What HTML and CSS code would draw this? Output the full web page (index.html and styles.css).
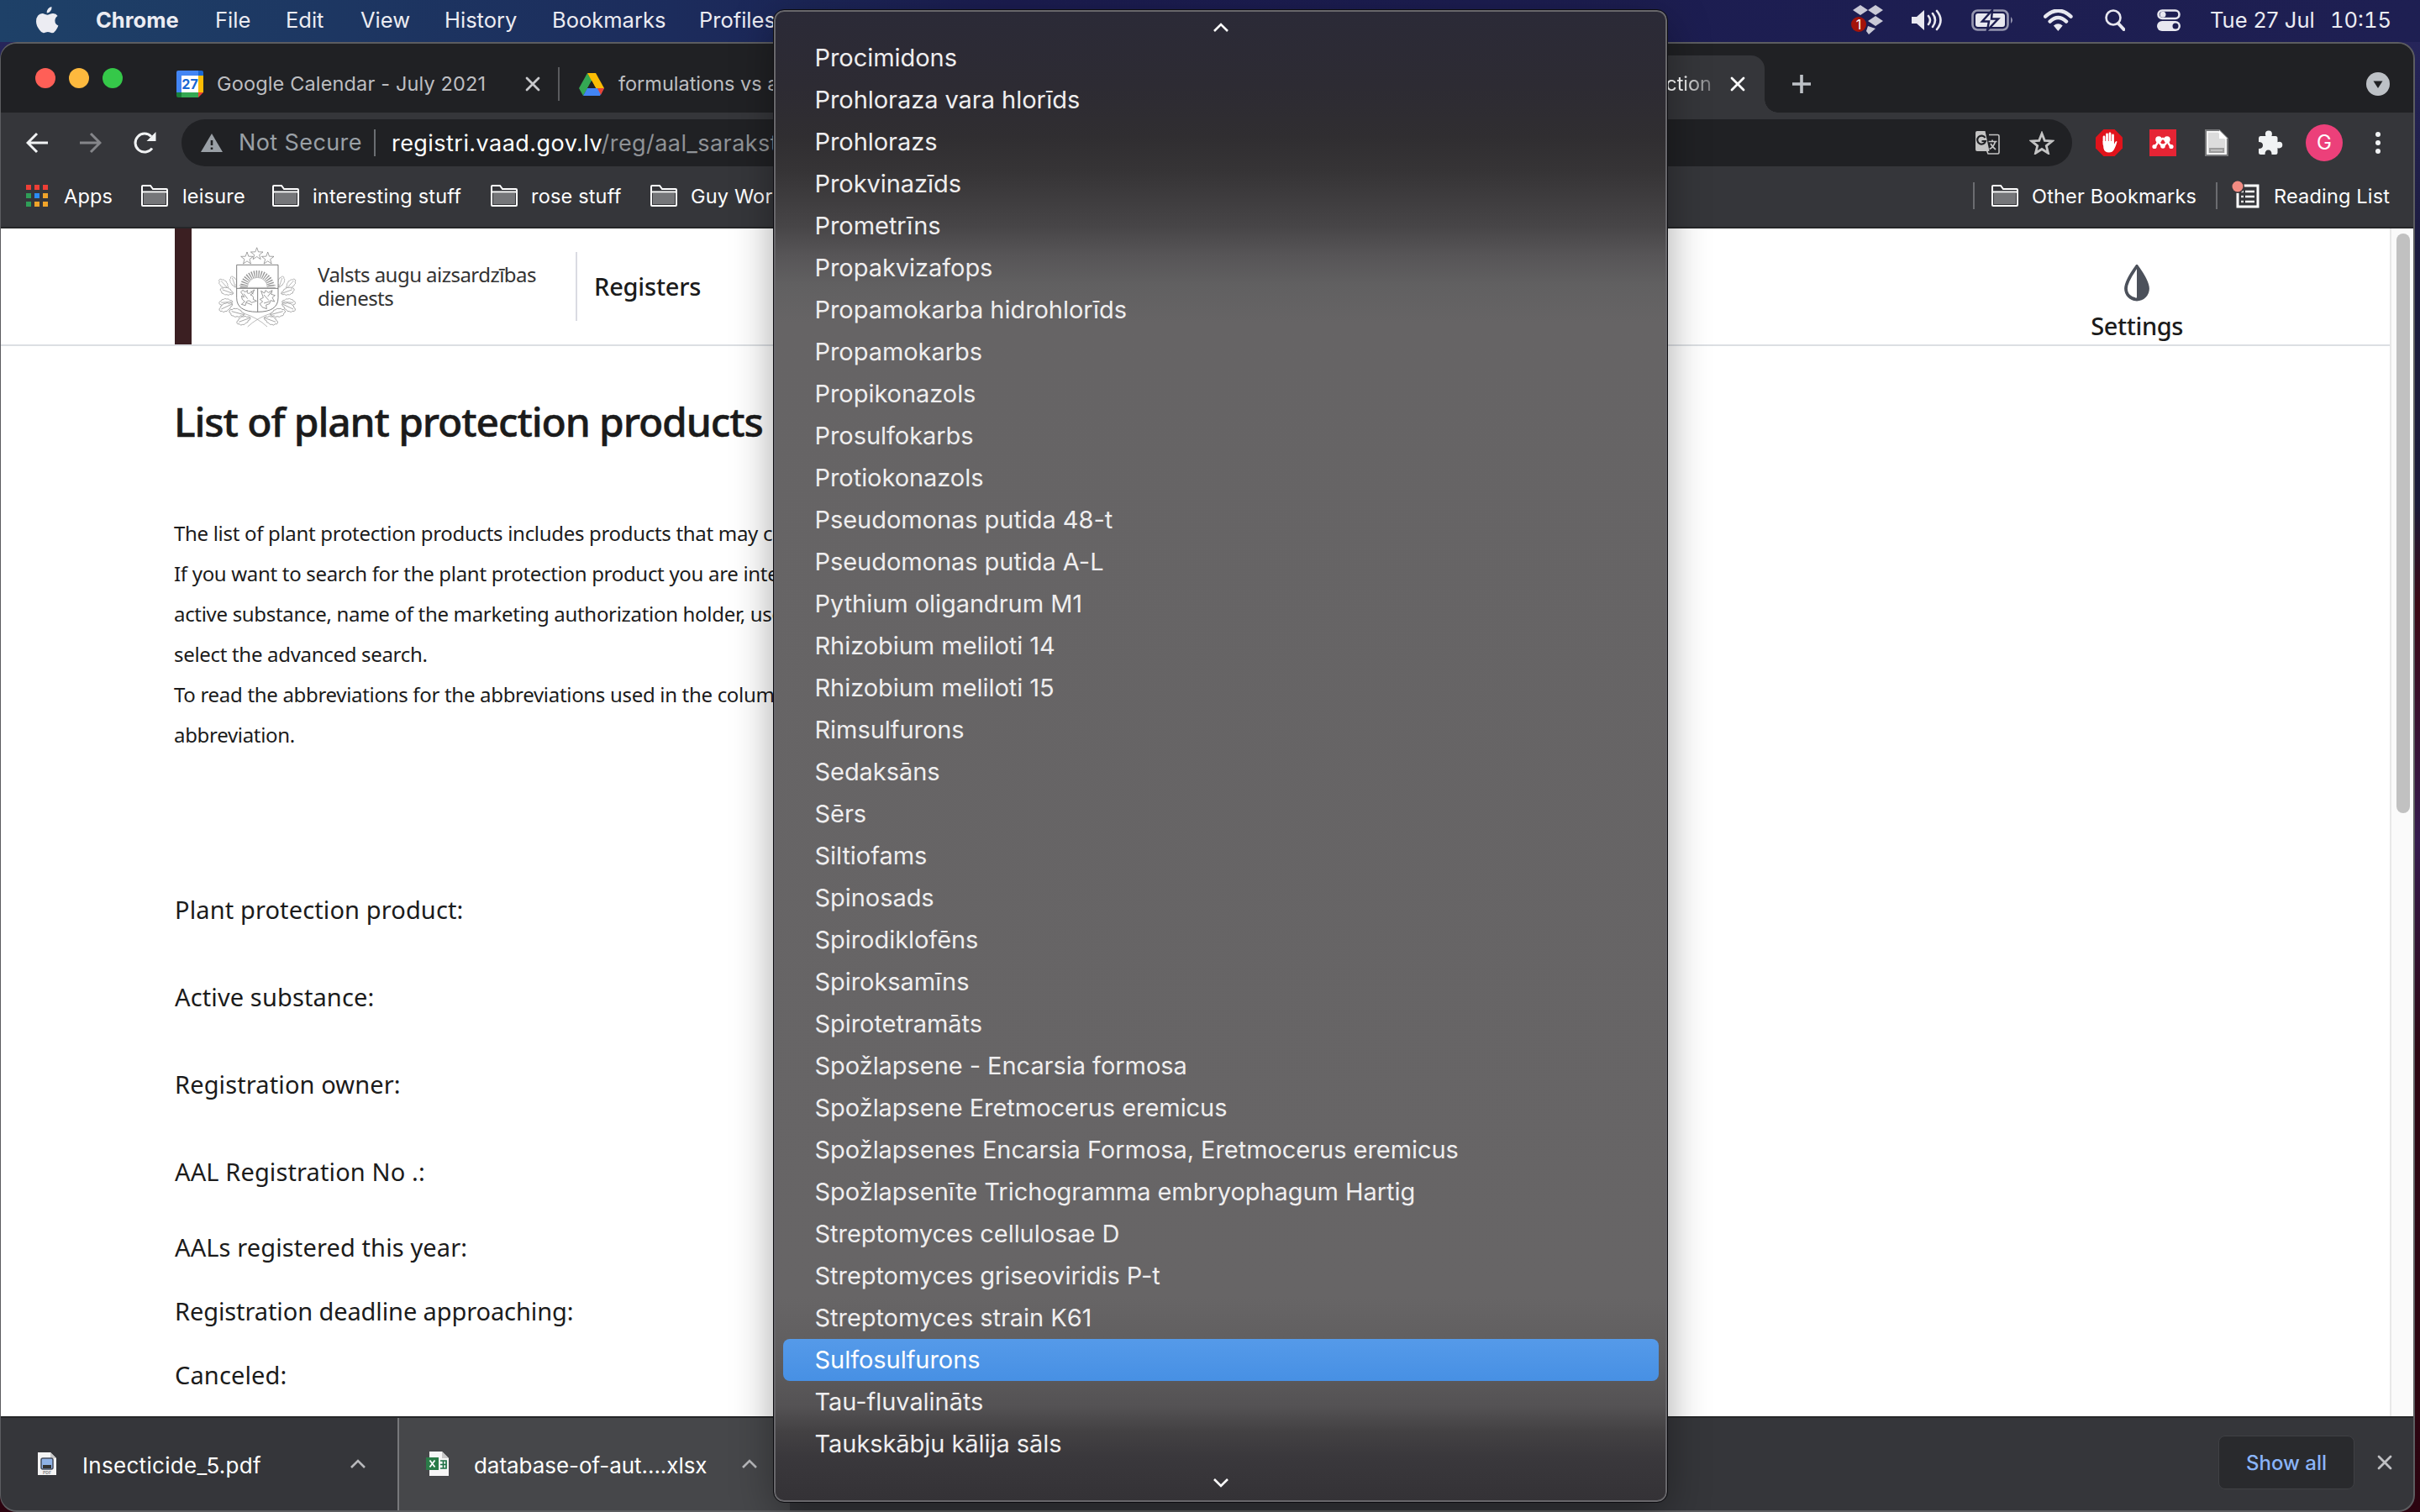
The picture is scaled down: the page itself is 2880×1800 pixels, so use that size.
FILE: index.html
```html
<!DOCTYPE html>
<html lang="en">
<head>
<meta charset="utf-8">
<title>List of plant protection products</title>
<link rel="stylesheet" href="styles.css">
</head>
<body>
<svg class="defs" aria-hidden="true">
  <symbol id="folder" viewBox="0 0 32 26"><path d="M3 10h26v13H3z" fill="#757679"/><path d="M1 24V2q0-1 1-1h9l3 4h16q1 0 1 1v18q0 1-1 1H2q-1 0-1-1zM1 8.500h30" fill="none" stroke="#fff" stroke-width="2"/></symbol>
  <symbol id="cross" viewBox="0 0 18 18"><path d="M2 2l14 14M16 2L2 16" fill="none" stroke="currentColor" stroke-width="2.800" stroke-linecap="round"/></symbol>
  <symbol id="chev" viewBox="0 0 20 12"><path d="M2 10l8-8 8 8" fill="none" stroke="currentColor" stroke-width="2.600"/></symbol>
  <symbol id="star5" viewBox="-24 -24 48 48"><path d="M0-23L5.500-7.500 22-7 9 3 13.500 19 0 9.500-13.500 19-9 3-22-7-5.500-7.500z" fill="#fff" stroke="#777" stroke-width="2"/></symbol>
  <symbol id="leaf" viewBox="0 0 44 26"><path d="M2 13q4-7 9-5 1-6 8-4 5-5 10-1 7-2 7 4 7 1 6 6-1 5-7 5 0 5-7 4-4 4-9 0-6 2-8-4-6 1-9-5zM4 13h32" fill="#fff" stroke="#909090" stroke-width="1.600"/></symbol>
</svg>
<div class="desktop">
  <header class="menubar">
    <nav class="menus">
      <svg class="apple" viewBox="0 0 27 32"><path d="M18.500 0q.4 3-1.500 5.200-2 2.300-4.300 2.200-.3-2.800 1.500-5Q16 .4 18.500 0zM25.600 11q-3.200 2-3.200 5.600 0 4.400 4 6-1 3-3 5.700-2 3-4.400 3-1.200 0-2.600-.7-2.400-1-5 0-1.300.7-2.600.7-2.400-.1-4.700-3.600Q0 22.600 0 17.500q0-4.300 2.200-7Q4.300 8 7.300 8q1.300 0 3.300.9 2 .8 2.900.8.700 0 3-1 2-.8 3.800-.7 3.500.2 5.300 3z"/></svg>
      <b>Chrome</b><span>File</span><span>Edit</span><span>View</span><span>History</span><span>Bookmarks</span><span>Profiles</span>
    </nav>
    <div class="status">
      <svg class="dropbox" viewBox="0 0 40 36"><path d="M11 0l9 6-9 6-9-6zM29 0l9 6-9 6-9-6zM29 13l9 6-9 6-9-6zM20 25l9 3-8 7-3-4z" fill="#c9c9d6"/><circle cx="9" cy="23" r="9" fill="#a3140b"/><text x="9" y="29" text-anchor="middle" fill="#fff">1</text></svg>
      <svg viewBox="0 0 36 26"><path d="M0 9h6l9-8v24l-9-8H0z"/><path d="M20 8q4 5 0 10M25 5q6 8 0 16M30 2q9 11 0 22" class="ln"/></svg>
      <svg viewBox="0 0 50 26"><rect x="1.500" y="1.500" width="42" height="23" rx="6" class="ln dim"/><rect x="5" y="5" width="35" height="16" rx="3"/><path d="M47 9q4 4 0 8z" opacity=".6"/><path d="M25 1L13 14.500h8L19 25l13-13.500h-8z" stroke="#1d1e50" stroke-width="2.500"/></svg>
      <svg viewBox="0 0 32 24"><path d="M2 8q14-13 28 0M7 13.500q9-8.500 18 0" class="ln w4"/><path d="M11 18q5-4 10 0l-5 6z"/></svg>
      <svg viewBox="0 0 24 26"><circle cx="10" cy="10" r="8.500" class="ln"/><path d="M16 17l6.500 7" class="ln w4"/></svg>
      <svg viewBox="0 0 28 26"><rect x="1.500" y="1.500" width="25" height="9.500" rx="4.700" class="ln"/><circle cx="7" cy="6.200" r="3.500"/><rect x="0" y="14" width="28" height="12" rx="6"/><circle cx="22" cy="20" r="3.500" fill="#1d1e50"/></svg>
      <span>Tue 27 Jul</span><span class="clock">10:15</span>
    </div>
  </header>

  <main class="window">
    <div class="tabs">
      <div class="lights"><i></i><i></i><i></i></div>
      <div class="tab first">
        <svg class="cal" viewBox="0 0 32 32"><path d="M2 0h24v6H6v20H0V2q0-2 2-2z" fill="#4285f4"/><path d="M26 0h4q2 0 2 2v4h-6z" fill="#1967d2"/><path d="M26 6h6v20h-6z" fill="#fbbc04"/><path d="M6 26h20v6H6z" fill="#34a853"/><path d="M0 26h6v6H2q-2 0-2-2z" fill="#188038"/><path d="M26 26h6l-6 6z" fill="#ea4335"/><path d="M6 6h20v20H6z" fill="#fff"/><text x="16" y="21.500" text-anchor="middle">27</text></svg>
        <span>Google Calendar - July 2021</span>
        <svg class="x"><use href="#cross"/></svg>
      </div>
      <div class="tab second">
        <svg class="drive" viewBox="0 0 30 27"><path d="M10 0l5.500 9L5 27 0 18z" fill="#34a853"/><path d="M10 0h10l10 18H20z" fill="#fbbc04"/><path d="M10 18h20l-5 9H5z" fill="#4285f4"/><path d="M22 18h8l-4 8z" fill="#ea4335"/><path d="M15 9l5 9H10z" fill="#202124"/></svg>
        <span>formulations vs active</span>
      </div>
      <div class="tab active"><span>plant protection</span><svg class="x"><use href="#cross"/></svg></div>
      <svg class="plus" viewBox="0 0 24 24"><path d="M12 1v22M1 12h22"/></svg>
      <svg class="tabsearch" viewBox="0 0 28 28"><circle cx="14" cy="14" r="14" fill="#bdc1c6"/><path d="M8.500 10.500h11L14 19z" fill="#202124"/></svg>
    </div>

    <div class="toolbar">
      <svg class="back" viewBox="0 0 26 26"><path d="M26 13H3M13 2L2 13l11 11"/></svg>
      <svg class="fwd" viewBox="0 0 26 26"><path d="M0 13h23M13 2l11 11-11 11"/></svg>
      <svg class="reload" viewBox="0 0 28 28"><path d="M23 20.500A11 11 0 1 1 22 6.500"/><path d="M27.500 1v11h-11z" class="fill"/></svg>
      <div class="omnibox">
        <svg class="warn" viewBox="0 0 26 22"><path d="M13 0l13 22H0z" fill="#9aa0a6"/><path d="M13 8v6M13 16.500v2.500" stroke="#202124" stroke-width="2.600"/></svg>
        <span class="secure">Not Secure</span>
        <span class="url">registri.vaad.gov.lv<em>/reg/aal_saraksts</em></span>
        <svg class="trans" viewBox="0 0 29 28"><path d="M16 4.500h10.500q1.500 0 1.500 1.500v19.500q0 1.500-1.500 1.500H15l-2-5" fill="none" stroke="#c4c4c4" stroke-width="1.600"/><path d="M2 0h9.500l5 24H2q-2 0-2-2V2q0-2 2-2z" fill="#c4c4c4"/><path d="M11.500 8A5 5 0 1 0 12 12H7.500" fill="none" stroke="#202124" stroke-width="2.200"/><path d="M15.500 12.500h10M20 10.500v2M23.500 12.500q-2 7-7 9M18 15q2 4 6 7" fill="none" stroke="#c4c4c4" stroke-width="1.700"/></svg>
        <svg class="fav" viewBox="0 0 30 28"><path d="M15 3l3.300 8.300 8.900.6-6.900 5.700 2.200 8.700L15 21.500l-7.500 4.800 2.200-8.700-6.900-5.700 8.900-.6z"/></svg>
      </div>
      <div class="exts">
        <svg viewBox="0 0 32 32"><path d="M9.400 0h13.200L32 9.400v13.200L22.600 32H9.400L0 22.600V9.400z" fill="#e0131b"/><path d="M10 9v9M13.500 6v11M17 5v12M20.500 7v11" stroke="#fff" stroke-width="2.800" stroke-linecap="round"/><path d="M8.600 14h13.300v4l1.500-3q2-2 2 0-1 4-3 8-2 4.500-6.500 4.500-5.500 0-6.500-5z" fill="#fff"/></svg>
        <svg viewBox="0 0 32 32"><path d="M0 0h32v32H0z" fill="#e62434"/><path d="M6 20q4-2 4-7M26 20q-4-2-4-7M11 12q1 7 5 7t5-7M14 12l2-1 2 1" fill="none" stroke="#fff" stroke-width="2.500"/><g fill="#fff"><circle cx="6" cy="20.500" r="2.600"/><circle cx="26" cy="20.500" r="2.600"/><circle cx="16" cy="20" r="2.800"/><circle cx="11" cy="12" r="3.800"/><circle cx="21" cy="12" r="3.800"/></g></svg>
        <svg viewBox="0 0 32 32"><path d="M3 1h16l10 10v20H3z" fill="#e2e2e2" stroke="#77787a" stroke-width="2"/><path d="M5 3h13l9 9v17H5z" fill="#dcdcdc" stroke="#fafafa" stroke-width="1.500"/><path d="M19 1v10h10z" fill="#fff"/><path d="M7 22h18v6H7z" fill="#9c9c9c"/><path d="M9 25h14" stroke="#ccc" stroke-width="1.600"/></svg>
        <svg viewBox="0 0 32 32"><path d="M4 8h6.500q-.6-1-.6-2.500a4 4 0 0 1 8 0q0 1.500-.6 2.500H22q2.500 0 2.500 2.500v4.800q1-.5 2-.5a3.700 3.700 0 0 1 0 7.600q-1 0-2-.5v5.600q0 2.500-2.500 2.500h-4.500q0-5.500-4-5.500T9.500 30H4.500Q2 30 2 27.500V23q5 0 5-4t-5-4v-4.500Q2 8 4 8z" fill="#f1f3f4"/></svg>
        <span class="avatar">G</span>
        <svg class="dots" viewBox="0 0 6 28"><circle cx="3" cy="4" r="3"/><circle cx="3" cy="14" r="3"/><circle cx="3" cy="24" r="3"/></svg>
      </div>
    </div>

    <div class="bookmarks">
      <svg class="apps" viewBox="0 0 26 27"><g fill="#ee3f36"><path d="M0 0h6v6H0zM10 0h6v6h-6zM20 0h6v6h-6z"/></g><path d="M0 10h6v6H0zM0 20h6v6H0z" fill="#2f9e58"/><path d="M10 10h6v6h-6z" fill="#2b8cf5"/><path d="M20 10h6v6h-6zM10 20h6v6h-6zM20 20h6v6h-6z" fill="#f0a42a"/></svg>
      <span>Apps</span>
      <svg class="folder"><use href="#folder"/></svg><span>leisure</span>
      <svg class="folder"><use href="#folder"/></svg><span>interesting stuff</span>
      <svg class="folder"><use href="#folder"/></svg><span>rose stuff</span>
      <svg class="folder"><use href="#folder"/></svg><span>Guy Work</span>
      <i class="sep"></i>
      <svg class="folder"><use href="#folder"/></svg><span>Other Bookmarks</span>
      <i class="sep"></i>
      <svg class="reading" viewBox="0 0 34 34"><rect x="7" y="6" width="24" height="25" fill="none" stroke="#fff" stroke-width="3"/><path d="M16 13h11M16 19h11M16 25h11" stroke="#fff" stroke-width="2.500"/><path d="M11 13h3M11 19h3M11 25h3" stroke="#ddd" stroke-width="2.500"/><circle cx="7" cy="7" r="8" fill="#35363a"/><circle cx="7" cy="7" r="6.500" fill="#f28b82"/></svg>
      <span>Reading List</span>
    </div>

    <div class="view">
      <div class="page">
        <header class="site">
          <svg class="emblem" viewBox="0 0 390 360">
            <g transform="translate(-7 0)">
              <use href="#leaf" width="50" height="30" transform="translate(92 200) rotate(-132)"/>
              <use href="#leaf" width="46" height="28" transform="translate(116 190) rotate(-110)"/>
              <use href="#leaf" width="56" height="32" transform="translate(118 222) rotate(-160)"/>
              <use href="#leaf" width="54" height="32" transform="translate(122 250) rotate(-185)"/>
              <use href="#leaf" width="60" height="34" transform="translate(128 256) rotate(155)"/>
              <use href="#leaf" width="66" height="36" transform="translate(160 300) rotate(195)"/>
              <use href="#leaf" width="62" height="34" transform="translate(192 306) rotate(160)"/>
            </g>
            <g transform="matrix(-1 0 0 1 404 0)">
              <use href="#leaf" width="50" height="30" transform="translate(92 200) rotate(-132)"/>
              <use href="#leaf" width="46" height="28" transform="translate(116 190) rotate(-110)"/>
              <use href="#leaf" width="56" height="32" transform="translate(118 222) rotate(-160)"/>
              <use href="#leaf" width="54" height="32" transform="translate(122 250) rotate(-185)"/>
              <use href="#leaf" width="60" height="34" transform="translate(128 256) rotate(155)"/>
              <use href="#leaf" width="66" height="36" transform="translate(160 300) rotate(195)"/>
              <use href="#leaf" width="62" height="34" transform="translate(192 306) rotate(160)"/>
            </g>
            <path d="M150 276q50 16 84 48M248 276q-50 16-84 48" class="thin"/>
            <use href="#star5" x="138" y="56" width="48" height="48"/><use href="#star5" x="212" y="56" width="48" height="48"/><use href="#star5" x="173" y="40" width="48" height="48"/>
            <path d="M125 103h148v118q0 50-74 50t-74-50z" fill="#fff" stroke="#666" stroke-width="2.500"/>
            <path d="M150 184a49 49 0 0 1 98 0" fill="none" stroke="#999" stroke-width="24" stroke-dasharray="4 4"/>
            <path d="M163 184a36 36 0 0 1 72 0M134 184h130M134 176h26M238 176h26" class="thin"/>
            <path d="M125 187h148M200 187v84" stroke="#666" stroke-width="2.500"/>
            <path d="M140 200q8-12 14 0l10-6q-6 14 8 10l16-12q-4 16-14 18 14 4 10 16l12 6-18 6q-8-12-18-4l-4 14-14-4 12-10q-12-6-12-20l10 4zM150 206l14 18M176 196l8 12M160 238l20 8" class="lion"/>
            <path d="M212 196l12 8 4-10 10 8 14-8-4 14 14 4-10 8 8 14-14-4-4 12-12 4 2 14-16-6-8-12 10-8-10-8 12-6zM222 210l18 20M248 200l-12 16M222 240l20-6" class="lion"/>
          </svg>
          <p class="org">Valsts augu aizsardzības<br>dienests</p>
          <a class="reg">Registers</a>
          <a class="settings">
            <svg viewBox="0 0 32 44"><path d="M16 2Q3 20 3 28.500a13 13 0 0 0 26 0Q29 20 16 2z" fill="none" stroke="#4c515b" stroke-width="3.800"/><path d="M16 2Q29 20 29 28.500a13 13 0 0 1-13 13z" fill="#4c515b"/></svg>
            <span>Settings</span>
          </a>
        </header>
        <h1>List of plant protection products</h1>
        <p class="intro">The list of plant protection products includes products that may currently<br>If you want to search for the plant protection product you are interested<br>active substance, name of the marketing authorization holder, use or<br>select the advanced search.<br>To read the abbreviations for the abbreviations used in the columns<br>abbreviation.</p>
        <form class="search">
          <label>Plant protection product:</label>
          <label>Active substance:</label>
          <label>Registration owner:</label>
          <label>AAL Registration No .:</label>
          <label class="tick">AALs registered this year:</label>
          <label class="tick deadline">Registration deadline approaching:</label>
          <label class="tick">Canceled:</label>
        </form>
      </div>
      <div class="track"><div class="thumb"></div></div>
    </div>

    <footer class="downloads">
      <div class="item">
        <svg class="file" viewBox="0 0 24 29"><path d="M1 1h15l7 7v20H1z" fill="#f4f4f4"/><path d="M16 1v7h7z" fill="#c8c8c8"/><rect x="5" y="8" width="14" height="13" rx="2" fill="#8fb2e6" stroke="#444c5e" stroke-width="1.500"/><path d="M7 16h10v4H7z" fill="#333"/><text x="12" y="27" text-anchor="middle" class="pdf">PDF</text></svg>
        <span>Insecticide_5.pdf</span>
        <svg class="up"><use href="#chev"/></svg>
      </div>
      <div class="item two">
        <svg class="file" viewBox="0 0 27 29"><path d="M4 0h15l8 8v21H4z" fill="#f6f6f6"/><path d="M19 0v8h8z" fill="#c8c8c8"/><path d="M17 11h7v9h-7M17 15.500h7M20.500 11v9" fill="none" stroke="#1d7044" stroke-width="1.700"/><path d="M0 7h15v15H0z" fill="#2a7b48"/><path d="M4.500 10.500l6 8M10.500 10.500l-6 8" stroke="#fff" stroke-width="1.800"/></svg>
        <span>database-of-aut....xlsx</span>
        <svg class="up"><use href="#chev"/></svg>
      </div>
      <button class="showall">Show all</button>
      <svg class="x"><use href="#cross"/></svg>
    </footer>
  </main>
</div>

<div class="dropdown">
  <svg class="more up"><use href="#chev"/></svg>
  <ul>
    <li>Procimidons</li><li>Prohloraza vara hlorīds</li><li>Prohlorazs</li><li>Prokvinazīds</li><li>Prometrīns</li><li>Propakvizafops</li><li>Propamokarba hidrohlorīds</li><li>Propamokarbs</li><li>Propikonazols</li><li>Prosulfokarbs</li><li>Protiokonazols</li><li>Pseudomonas putida 48-t</li><li>Pseudomonas putida A-L</li><li>Pythium oligandrum M1</li><li>Rhizobium meliloti 14</li><li>Rhizobium meliloti 15</li><li>Rimsulfurons</li><li>Sedaksāns</li><li>Sērs</li><li>Siltiofams</li><li>Spinosads</li><li>Spirodiklofēns</li><li>Spiroksamīns</li><li>Spirotetramāts</li><li>Spožlapsene - Encarsia formosa</li><li>Spožlapsene Eretmocerus eremicus</li><li>Spožlapsenes Encarsia Formosa, Eretmocerus eremicus</li><li>Spožlapsenīte Trichogramma embryophagum Hartig</li><li>Streptomyces cellulosae D</li><li>Streptomyces griseoviridis P-t</li><li>Streptomyces strain K61</li><li class="on">Sulfosulfurons</li><li>Tau-fluvalināts</li><li>Taukskābju kālija sāls</li>
  </ul>
  <svg class="more down"><use href="#chev"/></svg>
</div>
</body>
</html>
```
FILE: styles.css
```css
* { box-sizing: border-box; }
html, body { margin: 0; width: 2880px; height: 1800px; overflow: hidden; }
body { position: relative; font-family: Inter, "Liberation Sans", sans-serif; color: #fff; white-space: nowrap; }
ul, p, h1 { margin: 0; padding: 0; list-style: none; }
svg { display: block; flex: none; }
.defs { position: absolute; width: 0; height: 0; }

.desktop { display: flex; flex-direction: column; height: 1800px; background: linear-gradient(#26255a 50px, #1c1b3e 300px, #1a1a38 600px, #3c0814 720px, #351a4e 1000px, #2c0612 1250px, #2c0410); }

/* macOS menu bar */
.menubar { display: flex; justify-content: space-between; height: 50px; padding: 0 0 3px 43px; background: linear-gradient(90deg, #1e4168, #1c2c5c 800px, #1b1c50 1200px, #1e1f52); font-size: 25.500px; color: #ececf2; }
.menus { display: grid; grid-template-columns: 71px 142px 84px 89px 100px 128px 175px 100px; align-items: center; }
.apple { width: 27px; height: 32px; fill: #ececf2; }
.status { display: grid; grid-template-columns: 72px 71px 86px 73px 62px 63px 143px 107px; align-items: center; fill: #e8e8f0; }
.status svg { height: 26px; justify-self: start; }
.status .dropbox { height: 36px; font-size: 16px; }
.status .clock { font-variant-numeric: tabular-nums; }
.ln { fill: none; stroke: #e8e8f0; stroke-width: 2.600; stroke-linecap: round; }
.dim { opacity: .6; }
.w4 { stroke-width: 4; }

/* Browser window */
.window { display: flex; flex-direction: column; width: 2874px; height: 1750px; border: 2px solid #5c5d60; border-left-width: 1px; border-radius: 20px; overflow: hidden; background: #35363a; }
.tabs { display: flex; align-items: center; height: 82px; background: #202124; font-size: 23.500px; color: #bdbec1; }
.lights { display: flex; gap: 16px; width: 208px; padding-left: 41px; flex: none; }
.lights i { width: 24px; height: 24px; border-radius: 50%; background: #ff5f57; }
.lights i + i { background: #fdb93e; }
.lights i + i + i { background: #35c849; }
.tab { display: flex; align-items: center; padding-top: 14px; height: 82px; flex: none; }
.tab span { margin-top: -1px; }
.first { width: 457px; padding-left: 1px; }
.first::after { content: ""; width: 2px; height: 40px; background: #5a5b5e; margin-left: 21px; }
.cal { width: 32px; height: 32px; font-size: 16px; font-weight: 700; fill: #1967d2; }
.first span { width: 368px; margin-left: 16px; letter-spacing: .15px; }
.x { width: 18px; height: 18px; color: #c8c9cc; }
.second { width: 1165px; padding-left: 23px; }
.drive { width: 30px; height: 27px; margin-right: 17px; }
.active { width: 269px; height: 68px; margin-top: 14px; padding: 0 23px 0 0; border-radius: 16px 16px 0 0; background: #35363a; justify-content: flex-end; color: #fff; position: relative; }
.active span { -webkit-mask-image: linear-gradient(90deg, #000 78%, transparent 110%); mask-image: linear-gradient(90deg, #000 78%, transparent 110%); margin-right: 22px; }
.active .x { color: #fff; }
.active::after { content: ""; position: absolute; right: -16px; bottom: 0; width: 16px; height: 16px; background: radial-gradient(circle at 100% 0, transparent 15.500px, #35363a 16px); }
.plus { width: 24px; height: 24px; margin: 14px 0 0 32px; stroke: #bdc1c6; stroke-width: 3.600; }
.tabsearch { width: 28px; height: 28px; margin: 14px 28px 0 auto; }

.toolbar { display: flex; align-items: center; height: 72px; padding-left: 30px; fill: none; stroke: #f1f3f4; stroke-width: 3; }
.back, .fwd { width: 26px; height: 26px; }
.fwd { margin: 0 37px 0 38px; stroke: #85868a; }
.reload { width: 28px; height: 28px; }
.fill { fill: #f1f3f4; stroke: none; }
.omnibox { display: flex; align-items: center; width: 2250px; height: 56px; margin-left: 30px; padding: 0 21px 0 23px; border-radius: 28px; background: #202124; font-size: 27px; letter-spacing: .45px; stroke: none; }
.warn { width: 26px; height: 22px; }
.secure { width: 163px; height: 32px; line-height: 32px; margin-left: 19px; border-right: 2px solid #6b6e72; color: #9aa0a6; letter-spacing: .4px; }
.url { margin-left: 19px; flex: 1; }
.url em { font-style: normal; color: #8f9296; }
.trans { width: 29px; height: 28px; }
.fav { width: 30px; height: 28px; margin-left: 35px; stroke: #c4c4c4; stroke-width: 2.800; }
.exts { display: grid; grid-template-columns: 64px 64px 64px 60px 81px 6px; align-items: center; margin-left: 28px; stroke: none; }
.exts svg { width: 32px; height: 32px; }
.avatar { width: 44px; height: 44px; border-radius: 50%; background: #ec407a; font-size: 24px; line-height: 44px; text-align: center; margin-left: -2px; }
.exts .dots { width: 6px; height: 28px; fill: #f1f3f4; }

.bookmarks { display: grid; grid-template-columns: 45px 92px 49px 107px 48px 212px 48px 142px 48px 1526px 22px 48px 219px 19px 50px 150px; align-items: center; height: 66px; padding: 0 0 10px 30px; border-bottom: 2px solid #252628; font-size: 23.500px; letter-spacing: .18px; }
.apps { width: 26px; height: 27px; }
.folder { width: 32px; height: 26px; }
.sep { width: 2px; height: 32px; background: #6b6c70; }
.reading { width: 34px; height: 34px; margin-top: -2px; }

/* Web page */
.view { display: flex; height: 1414px; background: #fff; }
.page { width: 2843px; font-family: "Noto Sans", sans-serif; color: #1b1b1b; }
.site { display: flex; align-items: center; height: 140px; padding-left: 207px; border-bottom: 2px solid #dcdfe3; }
.site::before { content: ""; width: 20px; height: 138px; background: #3b1f22; }
.emblem { width: 130px; height: 120px; margin-left: 12px; }
.thin { fill: none; stroke: #999; stroke-width: 2; }
.lion { fill: none; stroke: #777; stroke-width: 2.200; }
.org { width: 309px; height: 82px; padding-top: 13px; margin-left: 8px; border-right: 2px solid #dadbe2; font-size: 24px; line-height: 28px; letter-spacing: -.54px; color: #333; }
.reg { margin: -1px 0 0 20px; font-size: 29px; font-weight: 500; letter-spacing: -.2px; }
.settings { display: flex; flex-direction: column; align-items: center; margin: 40px 246px 0 auto; font-size: 29px; line-height: 38px; font-weight: 500; letter-spacing: -.4px; }
.settings svg { width: 32px; height: 44px; margin-bottom: 10px; }
h1 { padding: 60px 0 0 206px; font-size: 48px; line-height: 60px; font-weight: 500; letter-spacing: -1.120px; -webkit-text-stroke: .5px #1b1b1b; }
.intro { padding: 79px 0 0 206px; font-size: 24px; line-height: 48px; letter-spacing: -.31px; }
.search { display: flex; flex-direction: column; padding: 132px 0 0 207px; font-size: 29px; letter-spacing: .12px; }
.search label { height: 104px; line-height: 104px; }
.search .tick { height: 76px; line-height: 76px; }
.search .deadline { letter-spacing: -.1px; }
.track { width: 28px; border-left: 2px solid #e8e8e8; background: #fafafa; padding: 6px 0 0 6px; }
.thumb { width: 16px; height: 690px; border-radius: 8px; background: #c1c1c1; }

.downloads { display: flex; align-items: center; height: 112px; border-top: 2px solid #252628; font-size: 26px; }
.item { display: flex; align-items: center; width: 472px; height: 110px; padding-left: 43px; }
.file { width: 24px; height: 29px; margin-top: -2px; }
.pdf { font-size: 5px; font-weight: 700; fill: #888; }
.item span { width: 318px; margin-left: 30px; padding-top: 2px; letter-spacing: .3px; }
.up { width: 20px; height: 12px; color: #b8b9bc; }
.two { width: 467px; padding-left: 34px; background: linear-gradient(90deg, #77787b 2px, #46474a 2px); }
.two .file { width: 27px; }
.two span { width: 318px; letter-spacing: -.05px; }
.showall { width: 162px; height: 64px; margin: -4px 27px 0 auto; border: 1px solid #404145; border-radius: 8px; background: #292a2d; color: #8ab4f8; font: 500 24px Inter, sans-serif; }
.downloads > .x { margin: -4px 25px 0 0; color: #bfc0c3; }

/* Select popup, drawn over the browser window */
.dropdown { position: absolute; left: 921px; top: 12px; width: 1063px; height: 1776px; padding: 0 8px 0 9px; border: 2px solid #68676b; border-radius: 12px; outline: 1px solid #0c0c10; background: linear-gradient(#2b2a37, #2d2b33 90px, #302e31 150px, #363436 190px, #474547 255px, #575557 290px, #616061 325px, #666465 370px, #676566 1530px, #5e5c5d 1610px, #545254 1660px, #434143 1690px, #3a383c 1720px, #343236); box-shadow: 0 14px 50px rgba(0, 0, 0, .36); font-size: 29px; letter-spacing: -.05px; color: #efeeef; }
.dropdown li { height: 50px; line-height: 50px; padding-left: 37.500px; }
.dropdown .on { border-radius: 8px; background: linear-gradient(#559ae9, #4790e4); color: #fff; }
.more { width: 20px; height: 12px; margin: 0 auto; color: #fff; }
.dropdown .up { margin-top: 13px; margin-bottom: 5px; }
.down { transform: scaleY(-1); margin-top: 15px; }
```
